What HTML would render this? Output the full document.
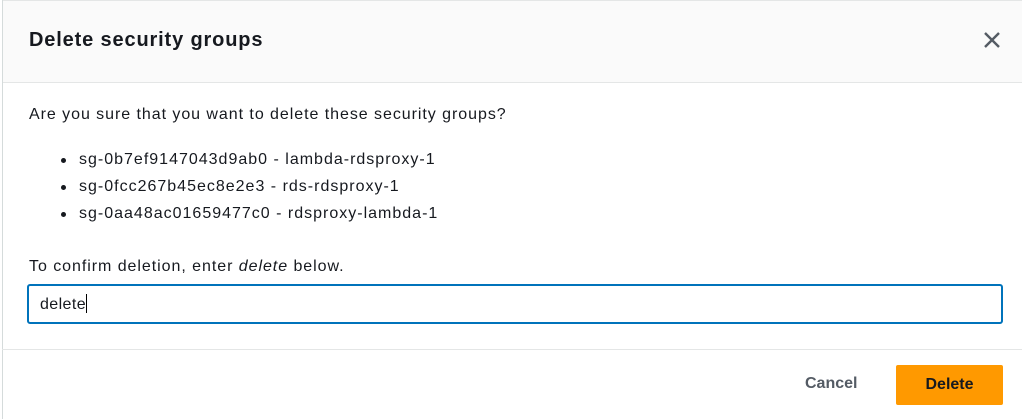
<!DOCTYPE html>
<html><head><style>
body{margin:0;width:1022px;height:419px;background:#fff;font-family:"Liberation Sans",sans-serif;color:#16191f;position:relative;overflow:hidden}
.hdr{position:absolute;left:2px;top:0;width:1020px;height:81px;background:#fafafa;border-bottom:1px solid #e4e6e6;border-top:1px solid #e4e6e6}
.lb{position:absolute;left:2px;top:0;width:1px;height:419px;background:#d5dbdb}
.t{position:absolute;white-space:nowrap;font-size:16px;line-height:20px;letter-spacing:0.95px}
.li{letter-spacing:1px}
h1{position:absolute;left:29px;top:28px;margin:0;font-size:20px;font-weight:bold;line-height:24px;letter-spacing:0.85px}
.inp{position:absolute;left:27px;top:284px;width:972px;height:36px;border:2px solid #0073bb;border-radius:3px}
.fl{position:absolute;left:2px;top:349px;width:1020px;height:1px;background:#e4e6e6}
.btn{position:absolute;left:896px;top:365px;width:107px;height:40px;background:#ff9900;border-radius:2px;font-weight:bold;font-size:16px;line-height:40px;text-align:center;color:#16191f}
.cancel{position:absolute;left:805px;top:374px;font-weight:bold;font-size:16px;line-height:20px;color:#545b64}
.dot{position:absolute;left:61px;width:5px;height:5px;border-radius:50%;background:#16191f}
</style></head><body>
<div class="hdr"></div><div class="lb"></div>
<h1>Delete security groups</h1>
<svg style="position:absolute;left:983px;top:31px" width="18" height="18" viewBox="0 0 18 18"><path d="M2 2L16 16M16 2L2 16" stroke="#545b64" stroke-width="2.4"/></svg>
<div class="t" style="left:29px;top:105px">Are you sure that you want to delete these security groups?</div>
<div class="dot" style="top:158px"></div><div class="t li" style="left:79px;top:150px">sg-0b7ef9147043d9ab0 - lambda-rdsproxy-1</div>
<div class="dot" style="top:185px"></div><div class="t li" style="left:79px;top:177px">sg-0fcc267b45ec8e2e3 - rds-rdsproxy-1</div>
<div class="dot" style="top:212px"></div><div class="t li" style="left:79px;top:204px">sg-0aa48ac01659477c0 - rdsproxy-lambda-1</div>
<div class="t" style="left:29px;top:257px">To confirm deletion, enter <i>delete</i> below.</div>
<div class="inp"></div>
<div class="t" style="left:40px;top:294px;letter-spacing:0.4px">delete<span style="display:inline-block;width:1px;height:19px;background:#000;vertical-align:-4px"></span></div>
<div class="fl"></div>
<div class="cancel">Cancel</div>
<div class="btn">Delete</div>
</body></html>
